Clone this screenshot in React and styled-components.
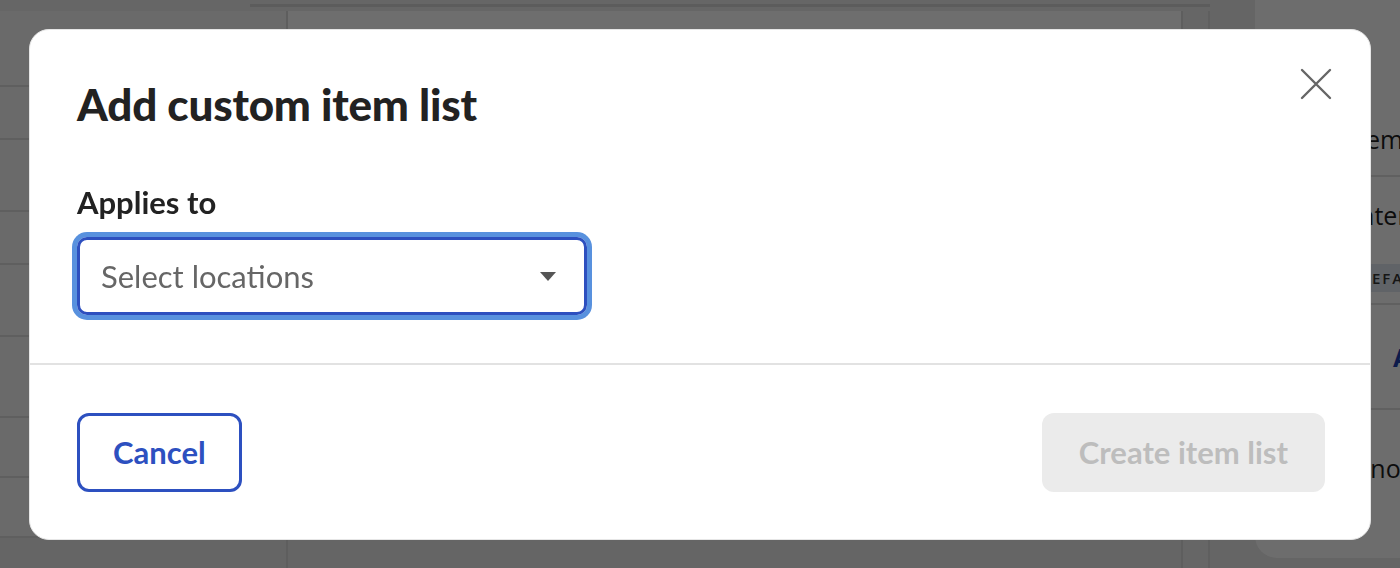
import React from 'react';
import styled, { createGlobalStyle } from 'styled-components';

const GlobalStyle = createGlobalStyle`
  * { box-sizing: border-box; }
  html, body { margin: 0; padding: 0; }
  body {
    width: 1400px;
    height: 568px;
    overflow: hidden;
    font-family: "Lato", "Liberation Sans", sans-serif;
    background: #e9e9e9;
  }
`;

// ---- page behind the dialog ----
const Page = styled.div`
  display: flex;
  flex-direction: column;
  width: 1400px;
  height: 568px;
`;
const TopStrip = styled.div`
  height: 11px;
  background: #ececec;
  flex-shrink: 0;
  display: flex;
  flex-direction: column;
  justify-content: flex-start;
  padding-top: 4px;

  &::after {
    content: '';
    display: block;
    margin-left: 250px;
    width: 975px;
    height: 3px;
    background: #d6d6d6;
  }
`;
const Body = styled.div`
  flex: 1;
  display: flex;
  min-height: 0;
`;
const SideList = styled.div`
  width: 288px;
  flex-shrink: 0;
  background: #e9e9e9;
  border-right: 2px solid #dadada;
  display: flex;
  flex-direction: column;
`;
const SideRow = styled.div`
  height: ${({ h }) => h}px;
  background: #f6f6f6;
  border-bottom: 2px solid #dcdcdc;
  flex-shrink: 0;
`;
const Main = styled.div`
  width: 895px;
  flex-shrink: 0;
  background: #e9e9e9;
  border-right: 2px solid #dadada;
`;
const MainSheet = styled.div`
  height: 525px;
  background: #ffffff;
`;
const Gutter = styled.div`
  width: 27px;
  flex-shrink: 0;
  background: #ececec;
  border-right: 2px solid #dcdcdc;
`;
const RightPanel = styled.div`
  flex: 1;
  min-width: 0;
  background: #e9e9e9;
  padding: 0 0 10px 45px;
  margin-top: -11px;
`;
const Card = styled.div`
  height: 100%;
  background: #fdfdfd;
  border-radius: 0 0 0 22px;
  padding-top: 102px;
  overflow: hidden;
  display: flex;
  flex-direction: column;
  white-space: nowrap;
  font-family: "Open Sans", sans-serif;
`;
const CardRow = styled.div`
  height: ${({ h }) => h}px;
  border-bottom: ${({ line }) => (line ? '2px solid #dedede' : 'none')};
  padding-left: ${({ indent }) => indent}px;
  display: flex;
  align-items: center;
  font-size: 25px;
  color: ${({ blue }) => (blue ? '#1f3fae' : '#1e1e1e')};
  font-weight: ${({ blue }) => (blue ? 700 : 400)};
  flex-shrink: 0;
`;
const Badge = styled.span`
  background: #dfe6ee;
  color: #333;
  font-size: 15px;
  font-weight: 600;
  letter-spacing: 2px;
  padding: 4px 8px;
  border-radius: 4px;
`;

// ---- dialog ----
const Scrim = styled.div`
  position: fixed;
  inset: 0;
  background: rgba(0, 0, 0, 0.57);
  display: flex;
  align-items: flex-start;
  justify-content: center;
  padding-top: 29px;
`;
const Dialog = styled.div`
  width: 1342px;
  height: 511px;
  background: #fff;
  border-radius: 20px;
  border: 1.5px solid #e6e6e6;
  display: flex;
  flex-direction: column;
  font-family: "Lato", "Liberation Sans", sans-serif;
`;
const Header = styled.div`
  display: flex;
  justify-content: space-between;
  align-items: flex-start;
  padding: 38px 38px 0 47px;
`;
const Title = styled.h1`
  margin: 10px 0 0;
  font-size: 44px;
  line-height: 52px;
  font-weight: 900;
  color: #222;
  letter-spacing: -0.2px;
`;
const CloseButton = styled.button`
  width: 32px;
  height: 32px;
  border: none;
  background: none;
  padding: 0;
  cursor: pointer;
  display: flex;
  align-items: center;
  justify-content: center;
`;
const Content = styled.div`
  padding: 53px 47px 48px;
  display: flex;
  flex-direction: column;
  align-items: flex-start;
`;
const Label = styled.label`
  font-size: 31px;
  font-weight: 700;
  color: #222;
  line-height: 38px;
  margin-bottom: 16px;
`;
const Select = styled.div`
  width: 510px;
  height: 78px;
  border: 3px solid #2d4fbf;
  border-radius: 10px;
  box-shadow: 0 0 0 5px #5891de;
  display: flex;
  align-items: center;
  justify-content: space-between;
  padding: 0 28px 0 21px;
`;
const Placeholder = styled.span`
  font-size: 31px;
  color: #666;
`;
const Divider = styled.hr`
  margin: 0;
  border: none;
  border-top: 2px solid #e2e2e2;
`;
const Footer = styled.div`
  flex: 1;
  display: flex;
  align-items: center;
  justify-content: space-between;
  padding: 0 45px 0 47px;
`;
const Button = styled.button`
  height: 79px;
  border-radius: 12px;
  font-family: inherit;
  font-size: 31px;
  font-weight: 700;
  padding: 0 ${({ pad }) => pad}px;
  border: ${({ secondary }) => (secondary ? '3px solid #2d50c0' : 'none')};
  background: ${({ secondary }) => (secondary ? '#fff' : '#ebebeb')};
  color: ${({ secondary }) => (secondary ? '#2d50c0' : '#bdbdbd')};
  cursor: ${({ disabled }) => (disabled ? 'default' : 'pointer')};
`;

const sideRows = [76, 53, 72, 53, 72, 81, 60, 60];

export default function App() {
  return (
    <>
      <GlobalStyle />
      <Page>
        <TopStrip />
        <Body>
          <SideList>
            {sideRows.map((h, i) => (
              <SideRow key={i} h={h} />
            ))}
          </SideList>
          <Main>
            <MainSheet />
          </Main>
          <Gutter />
          <RightPanel>
            <Card>
              <CardRow h={75} line indent={95}>Item</CardRow>
              <CardRow h={76} indent={58}>Counter</CardRow>
              <CardRow h={52} line indent={96}>
                <Badge>DEFAULT</Badge>
              </CardRow>
              <CardRow h={105} line indent={138} blue>Add</CardRow>
              <CardRow h={116} indent={100}>Know</CardRow>
            </Card>
          </RightPanel>
        </Body>
      </Page>

      <Scrim>
        <Dialog role="dialog" aria-labelledby="dlg-title">
          <Header>
            <Title id="dlg-title">Add custom item list</Title>
            <CloseButton aria-label="Close">
              <svg width="32" height="32" viewBox="0 0 32 32" fill="none">
                <path d="M2 2 L30 30 M30 2 L2 30" stroke="#666" strokeWidth="2.4" strokeLinecap="round" />
              </svg>
            </CloseButton>
          </Header>
          <Content>
            <Label>Applies to</Label>
            <Select>
              <Placeholder>Select locations</Placeholder>
              <svg width="16" height="9" viewBox="0 0 16 9">
                <path d="M0 0 H16 L8 9 Z" fill="#555" />
              </svg>
            </Select>
          </Content>
          <Divider />
          <Footer>
            <Button secondary pad={33}>Cancel</Button>
            <Button disabled pad={37}>Create item list</Button>
          </Footer>
        </Dialog>
      </Scrim>
    </>
  );
}
